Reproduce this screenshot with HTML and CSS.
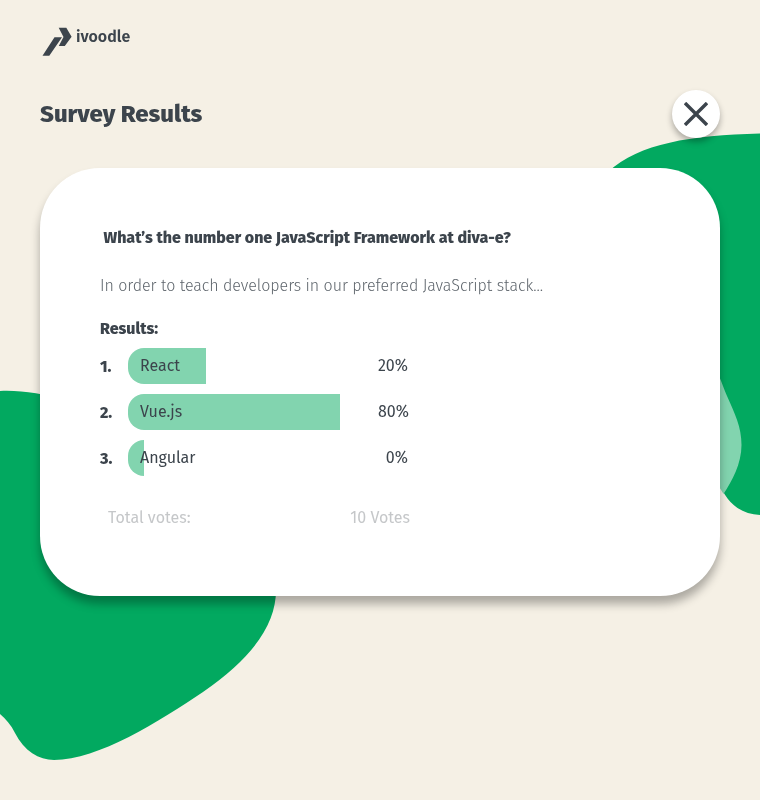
FILE: index.html
```html
<!DOCTYPE html>
<html lang="en">
<head>
<meta charset="utf-8">
<title>ivoodle – Survey Results</title>
<link rel="stylesheet" href="styles.css">
</head>
<body>
<svg class="backdrop" viewBox="0 0 760 800" aria-hidden="true">
  <path fill="#02a960" d="M0 391C105 386 276 500 276 590C276 625 252 658 203 692C160 721 98 760 54 760C39 760 24 751 15 733C11 725 6 719 0 714Z"/>
  <path fill="#02a960" d="M760 133.500C690 135.500 640 143 608 172L640 430L718 480C726 503 740 514 760 515Z"/>
  <path fill="#82d4af" d="M700 350C715 360 722 384 727 396C735 414 741.500 427 741.500 445C741.500 464 732 481 723.500 494L718 485L700 480Z"/>
</svg>
<div class="page">
  <header class="brand">
    <svg class="brand-mark" viewBox="0 0 32 30" aria-hidden="true">
      <path d="M18.700 .8h7.600l5.300 9-6.800 9.200h-6l4.700-9zM14.500 10.200h7.500L9.300 28.800H2.500z"/>
    </svg>
    <span class="brand-name">ivoodle</span>
  </header>
  <div class="title-row">
    <h1>Survey Results</h1>
    <button class="close" aria-label="Close">
      <svg viewBox="0 0 24 24"><path d="M1 1L23 23M23 1L1 23"/></svg>
    </button>
  </div>
  <main class="card">
    <h2>What’s the number one JavaScript Framework at diva-e?</h2>
    <p class="description">In order to teach developers in our preferred JavaScript stack...</p>
    <h3>Results:</h3>
    <ol class="results">
      <li><b>1.</b><div class="track"><div class="bar" style="width:78px"><span>React</span></div></div><span class="percent">20%</span></li>
      <li><b>2.</b><div class="track"><div class="bar" style="width:212px"><span>Vue.js</span></div></div><span class="percent wide">80%</span></li>
      <li><b>3.</b><div class="track"><div class="bar" style="width:16px"><span>Angular</span></div></div><span class="percent">0%</span></li>
    </ol>
    <div class="total"><span>Total votes:</span><span>10 Votes</span></div>
  </main>
</div>
</body>
</html>
```
FILE: styles.css
```css
* { box-sizing: border-box; margin: 0; padding: 0; }
body {
  background: #f5f0e5;
  color: #3c444c;
  font: 16px/24px "Fira Sans", "Noto Sans", sans-serif;
  height: 800px;
  overflow: hidden;
  white-space: nowrap;
}
.backdrop { position: absolute; left: 0; top: 0; width: 760px; height: 800px; }
.page { position: relative; padding: 27px 40px 0; will-change: transform; }
.brand { display: flex; height: 63px; }
.brand-mark { width: 32px; height: 30px; fill: #3c444c; }
.brand-name { margin: -2px 0 0 4px; font-weight: 600; }
.title-row { display: flex; justify-content: space-between; align-items: center; height: 48px; }
h1 { font-size: 24px; line-height: 32px; font-weight: 800; }
.close {
  display: grid; place-items: center;
  width: 48px; height: 48px;
  border: 0; border-radius: 50%; background: #fff;
  box-shadow: 0 4px 6px rgba(0, 0, 0, .3);
}
.close svg { width: 24px; height: 24px; stroke: #3c444c; stroke-width: 3.4; }
.card {
  height: 428px; margin-top: 30px; padding: 58px 60px 0;
  border-radius: 60px; background: #fff;
  box-shadow: 0 8px 10px rgba(0, 0, 0, .3);
}
h2 { margin-left: 3.5px; font-size: 16px; line-height: 24px; font-weight: 800; }
.description { margin-top: 24px; font-weight: 300; letter-spacing: -0.04px; color: #5d646b; }
h3 { margin-top: 19px; font-size: 16px; line-height: 24px; font-weight: 800; }
.results { display: grid; gap: 10px; margin-top: 7px; list-style: none; }
.results li { display: flex; align-items: center; width: 309px; height: 36px; }
.results b { width: 28px; padding-top: 1px; font-weight: 800; }
.track { width: 212px; margin-right: auto; }
.bar {
  display: flex; align-items: center; height: 36px; padding-left: 12px;
  border-radius: 16px 0 0 16px; background: #82d4af;
}
.percent { padding-right: 1px; }
.percent.wide { padding-right: 0; }
.total { display: flex; justify-content: space-between; width: 302px; margin: 30px 0 0 8px; color: #c5c7c9; }
```
